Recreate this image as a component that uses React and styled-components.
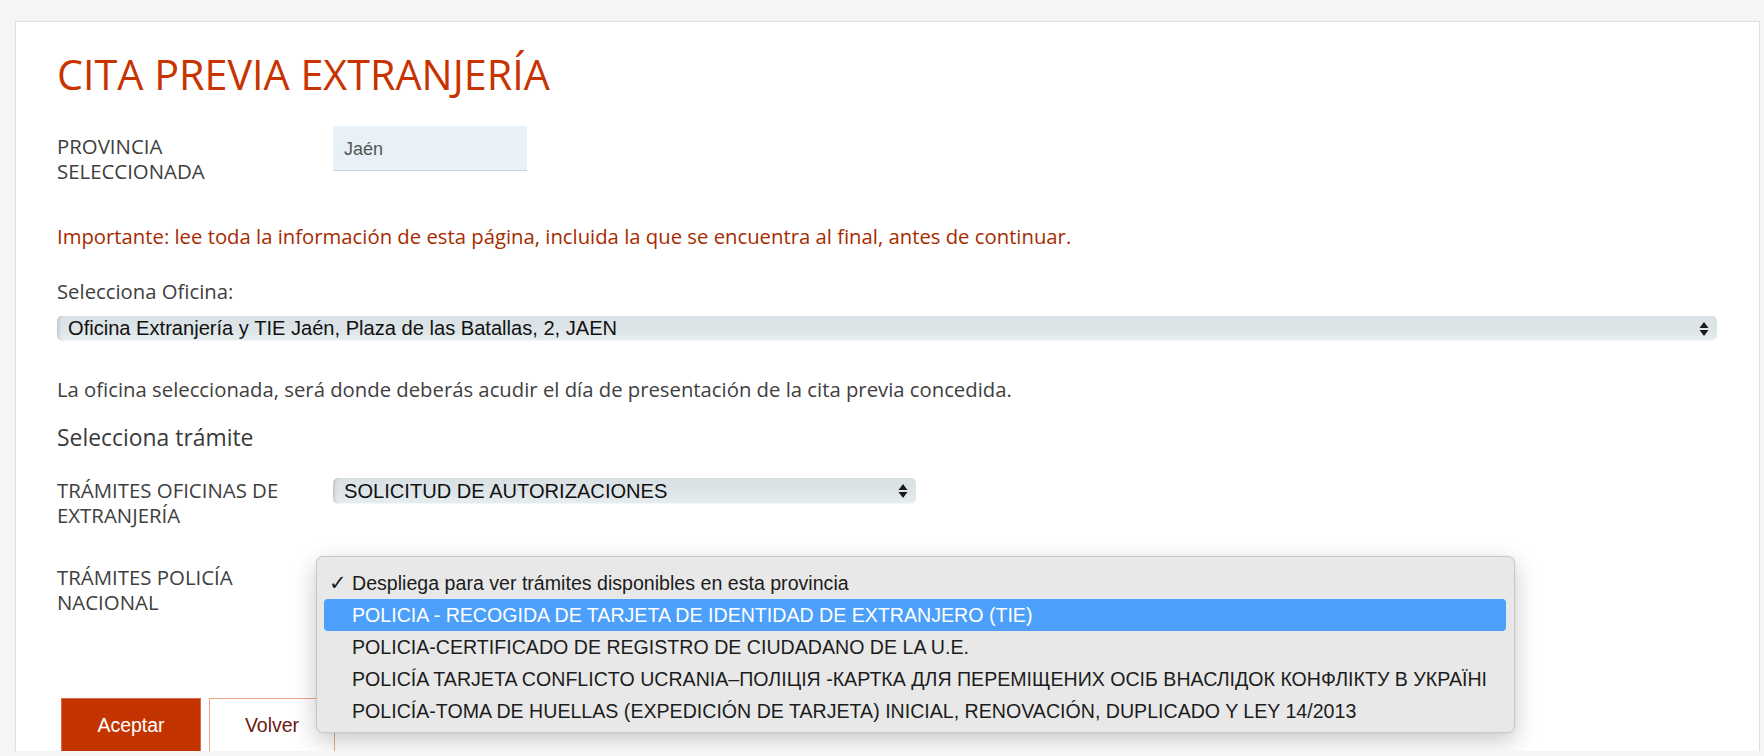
import styled, { createGlobalStyle } from "styled-components";

const GlobalStyle = createGlobalStyle`
  html, body {
    margin: 0;
    padding: 0;
    background: #f5f5f5;
  }
  body {
    font-family: "Open Sans", "DejaVu Sans", sans-serif;
    color: #3f3f3f;
    overflow: hidden;
  }
`;

const Page = styled.div`
  height: 756px;
  box-sizing: border-box;
  padding: 21px 4px 0 15px;
`;

const Card = styled.main`
  height: 730px;
  box-sizing: border-box;
  background: #fff;
  border: 1px solid #dedede;
  border-bottom: none;
  padding: 0 42px 0 41px;
  overflow: hidden;
`;

const Title = styled.h1`
  margin: 27px 0 0;
  font-size: 41.3px;
  line-height: 50px;
  font-weight: 400;
  color: #c73400;
`;

const FieldRow = styled.div`
  display: grid;
  grid-template-columns: 276px 1fr;
  align-items: start;
  margin-top: ${({ $gap }) => $gap}px;
  position: relative;
`;

const Label = styled.div`
  font-size: 20.4px;
  line-height: 25px;
  text-transform: uppercase;
  color: #404040;
  padding-top: ${({ $offset }) => $offset || 0}px;
`;

const ReadOnlyField = styled.div`
  width: 194px;
  height: 45px;
  box-sizing: border-box;
  padding: 2px 11px 0;
  background: #e7f1f7;
  border-bottom: 1px solid #cbd4d9;
  font-family: "Liberation Sans", Arial, sans-serif;
  font-size: 18px;
  line-height: 42px;
  color: #555;
`;

const Text = styled.p`
  margin: ${({ $gap }) => $gap}px 0 0;
  font-size: 20.3px;
  line-height: 25px;
  color: ${({ $warn }) => ($warn ? "#a62b00" : "#404040")};
`;

const SubTitle = styled.h2`
  margin: 21px 0 0;
  font-size: 22.9px;
  line-height: 30px;
  font-weight: 400;
  color: #3a3a3a;
`;

const SelectBox = styled.div`
  position: relative;
  margin-top: ${({ $gap }) => $gap || 0}px;
  width: ${({ $width }) => $width};
  height: ${({ $height }) => $height}px;
  box-sizing: border-box;
  padding: 0 30px 0 11px;
  border-radius: 5px;
  background: linear-gradient(to bottom, #d9e1e4 0%, #dee5e8 55%, #e7eef0 100%);
  box-shadow: inset 4px 0 3px -2px rgba(0, 0, 0, 0.13),
    inset 0 -1px 0 rgba(255, 255, 255, 0.6);
  font-family: "Liberation Sans", Arial, sans-serif;
  font-size: 20.1px;
  line-height: ${({ $height }) => $height}px;
  color: #111;
  white-space: nowrap;
`;

const Arrows = styled.svg`
  position: absolute;
  right: 8px;
  top: 50%;
  transform: translateY(-50%);
`;

const Menu = styled.ul`
  position: absolute;
  left: 259px;
  top: -9px;
  width: 1199px;
  margin: 0;
  padding: 10px 8px 5px 7px;
  list-style: none;
  box-sizing: border-box;
  background: #e8e8e8;
  border: 1px solid #c9c9c9;
  border-radius: 7px;
  box-shadow: 0 8px 24px rgba(0, 0, 0, 0.22), 0 0 2px rgba(0, 0, 0, 0.1);
  font-family: "Liberation Sans", Arial, sans-serif;
  font-size: 19.6px;
  z-index: 2;
`;

const Option = styled.li`
  position: relative;
  height: 32px;
  line-height: 32px;
  padding-left: 28px;
  border-radius: 4px;
  white-space: nowrap;
  background: ${({ $active }) => ($active ? "#4c9ffa" : "transparent")};
  color: ${({ $active }) => ($active ? "#fff" : "#1c1c1c")};
`;

const Check = styled.span`
  position: absolute;
  left: 5px;
  top: 0;
  font-family: "DejaVu Sans", sans-serif;
  font-size: 21px;
  font-weight: 700;
`;

const Buttons = styled.div`
  display: flex;
  gap: 8px;
  margin: 83px 0 0 4px;
`;

const Button = styled.button`
  height: 54px;
  width: ${({ $width }) => $width}px;
  border: 1px solid ${({ $primary }) => ($primary ? "#d9694a" : "#f2a68e")};
  background: ${({ $primary }) => ($primary ? "#c43400" : "#fff")};
  color: ${({ $primary }) => ($primary ? "#fff" : "#6a1a10")};
  font-family: "Liberation Sans", Arial, sans-serif;
  font-size: 19.5px;
  padding: 0;
  cursor: pointer;
`;

const UpDown = () => (
  <Arrows width="10" height="16" viewBox="0 0 10 16">
    <path d="M5 1 L9.5 7 H0.5 Z" fill="#1a1a1a" />
    <path d="M5 15 L9.5 9 H0.5 Z" fill="#1a1a1a" />
  </Arrows>
);

const policeOptions = [
  "Despliega para ver trámites disponibles en esta provincia",
  "POLICIA - RECOGIDA DE TARJETA DE IDENTIDAD DE EXTRANJERO (TIE)",
  "POLICIA-CERTIFICADO DE REGISTRO DE CIUDADANO DE LA U.E.",
  "POLICÍA TARJETA CONFLICTO UCRANIA–ПОЛІЦІЯ -КАРТКА ДЛЯ ПЕРЕМІЩЕНИХ ОСІБ ВНАСЛІДОК КОНФЛІКТУ В УКРАЇНІ",
  "POLICÍA-TOMA DE HUELLAS (EXPEDICIÓN DE TARJETA) INICIAL, RENOVACIÓN, DUPLICADO Y LEY 14/2013",
];

const App = () => (
  <>
    <GlobalStyle />
    <Page>
      <Card>
        <Title>CITA PREVIA EXTRANJERÍA</Title>

        <FieldRow $gap={27}>
          <Label $offset={8}>
            Provincia
            <br />
            Seleccionada
          </Label>
          <ReadOnlyField>Jaén</ReadOnlyField>
        </FieldRow>

        <Text $warn $gap={40}>
          Importante: lee toda la información de esta página, incluida la que
          se encuentra al final, antes de continuar.
        </Text>

        <Text $gap={30}>Selecciona Oficina:</Text>
        <SelectBox $gap={12} $width="100%" $height={25}>
          Oficina Extranjería y TIE Jaén, Plaza de las Batallas, 2, JAEN
          <UpDown />
        </SelectBox>

        <Text $gap={36}>
          La oficina seleccionada, será donde deberás acudir el día de
          presentación de la cita previa concedida.
        </Text>

        <SubTitle>Selecciona trámite</SubTitle>

        <FieldRow $gap={25}>
          <Label>
            Trámites oficinas de
            <br />
            extranjería
          </Label>
          <SelectBox $width="583px" $height={26}>
            SOLICITUD DE AUTORIZACIONES
            <UpDown />
          </SelectBox>
        </FieldRow>

        <FieldRow $gap={37}>
          <Label>
            Trámites policía
            <br />
            nacional
          </Label>
          <Menu>
            {policeOptions.map((option, i) => (
              <Option key={option} $active={i === 1}>
                {i === 0 && <Check>✓</Check>}
                {option}
              </Option>
            ))}
          </Menu>
        </FieldRow>

        <Buttons>
          <Button $primary $width={140}>
            Aceptar
          </Button>
          <Button $width={126}>Volver</Button>
        </Buttons>
      </Card>
    </Page>
  </>
);

export default App;
